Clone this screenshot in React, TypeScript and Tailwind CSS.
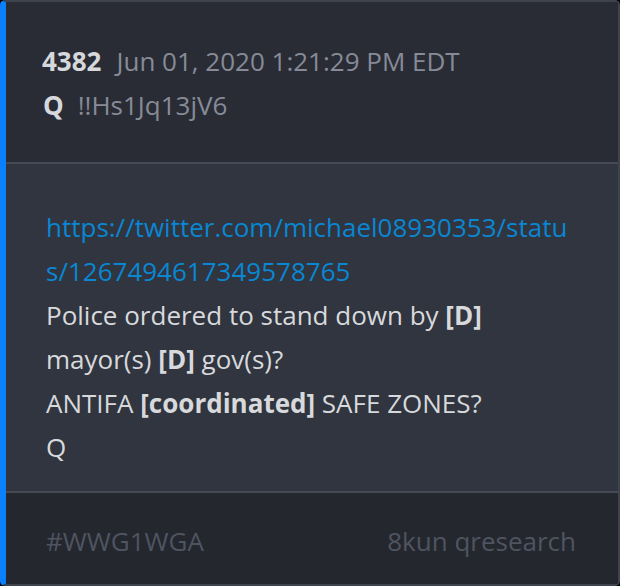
import React from "react";

export default function App() {
  return (
    <div className="w-[620px] h-[586px] bg-black" style={{ fontFamily: '"Open Sans", sans-serif' }}>
      <div className="w-[620px] h-[586px] flex flex-col rounded-[5px] overflow-hidden border-l-[6px] border-l-[#0a80fa] border-t-2 border-r-2 border-b-2 border-t-[#3e434d] border-r-[#3e434d] border-b-[#3e434d]">
        <div className="bg-[#292c35] h-[160px] pl-[36px] pt-[37px] text-[26px] leading-[44px]">
          <div className="flex gap-[15px]">
            <span className="font-bold text-[#d6d8dc]">4382</span>
            <span className="text-[#868b97]">Jun 01, 2020 1:21:29 PM EDT</span>
          </div>
          <div className="flex gap-[14px]">
            <span className="font-bold text-[#d6d8dc] pl-[1px]">Q</span>
            <span className="text-[#868b97]">!!Hs1Jq13jV6</span>
          </div>
        </div>
        <div className="h-[2px] bg-[#454a54]" />
        <div className="bg-[#30353f] h-[327px] pl-[40px] pr-[44px] pt-[41px] text-[26px] leading-[44px] text-[#d8d9dc]">
          <div className="text-[#0a86d2] break-all">https://twitter.com/michael08930353/status/1267494617349578765</div>
          <div>
            Police ordered to stand down by <span className="font-bold">[D]</span>
          </div>
          <div>
            mayor(s) <span className="font-bold">[D]</span> gov(s)?
          </div>
          <div>
            ANTIFA <span className="font-bold">[coordinated]</span> SAFE ZONES?
          </div>
          <div>Q</div>
        </div>
        <div className="h-[2px] bg-[#454a54]" />
        <div className="bg-[#24272e] flex-1 pl-[40px] pr-[42px] pt-[26px] text-[26px] leading-[44px] text-[#4f5461] flex justify-between">
          <span>#WWG1WGA</span>
          <span>8kun qresearch</span>
        </div>
      </div>
    </div>
  );
}
